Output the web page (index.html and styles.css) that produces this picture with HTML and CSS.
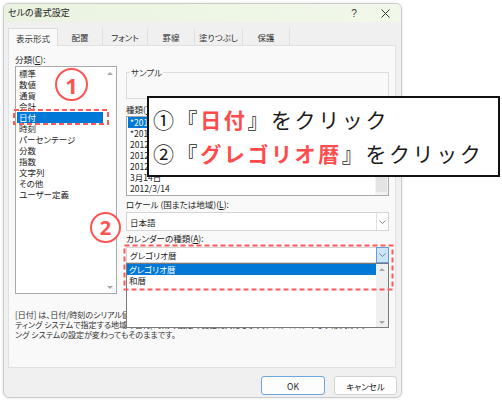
FILE: index.html
```html
<!DOCTYPE html>
<html lang="ja">
<head>
<meta charset="utf-8">
<title>セルの書式設定</title>
<link rel="stylesheet" href="styles.css">
</head>
<body>
<div class="desk">
  <div class="dialog">
    <div class="titlebar">
      <span class="title">セルの書式設定</span>
      <span class="tb-btn help">?</span>
      <span class="tb-btn close"><svg width="9" height="9" viewBox="0 0 9 9"><path d="M0.5 0.5L8.5 8.5M8.5 0.5L0.5 8.5" stroke="#333" stroke-width="1"/></svg></span>
    </div>
    <div class="tabs">
      <div class="tab active">表示形式</div>
      <div class="tab">配置</div>
      <div class="tab">フォント</div>
      <div class="tab">罫線</div>
      <div class="tab">塗りつぶし</div>
      <div class="tab">保護</div>
    </div>
    <div class="panel">
      <div class="cols">
        <div class="left">
          <div class="label">分類(<u>C</u>):</div>
          <div class="listbox cat">
            <ul class="items">
              <li>標準</li><li>数値</li><li>通貨</li><li>会計</li><li class="sel">日付</li><li>時刻</li><li>パーセンテージ</li><li>分数</li><li>指数</li><li>文字列</li><li>その他</li><li>ユーザー定義</li>
            </ul>
            <div class="vscroll"><span class="arr up"></span><span class="arr down"></span></div>
          </div>
        </div>
        <div class="right">
          <fieldset class="sample"><legend>サンプル</legend></fieldset>
          <div class="label lbl-types">種類(<u>T</u>):</div>
          <div class="listbox types">
            <ul class="items">
              <li class="sel">*2012/3/14</li><li>*2012年3月14日</li><li>2012-03-14</li><li>2012年3月14日</li><li>2012年3月</li><li>3月14日</li><li>2012/3/14</li>
            </ul>
            <div class="vscroll track"><span class="thumb"></span></div>
          </div>
          <div class="label lbl-locale">ロケール (国または地域)(<u>L</u>):</div>
          <div class="combo locale">
            <span class="val">日本語</span>
            <span class="drop"><svg width="7" height="4" viewBox="0 0 7 4"><path d="M0.5 0.5L3.5 3.5L6.5 0.5" fill="none" stroke="#8a8a8a" stroke-width="1"/></svg></span>
          </div>
          <div class="label">カレンダーの種類(<u>A</u>):</div>
          <div class="combo-wrap">
            <div class="combo cal">
              <span class="val">グレゴリオ暦</span>
              <span class="drop hot"><svg width="7" height="4" viewBox="0 0 7 4"><path d="M0.5 0.5L3.5 3.5L6.5 0.5" fill="none" stroke="#6b8196" stroke-width="1"/></svg></span>
            </div>
            <div class="droplist">
              <ul class="items">
                <li class="sel">グレゴリオ暦</li><li>和暦</li>
              </ul>
              <div class="vscroll gray"><span class="arr up"></span><span class="arr down"></span></div>
            </div>
          </div>
        </div>
      </div>
      <p class="desc">[日付] は、日付/時刻のシリアル値を日付形式で表示します。アスタリスク (*) で始まる日付形式は、オペレー<br>ティング システムで指定する地域の日付/時刻の設定の変更に対応します。アスタリスクのない形式は、オペレーティ<br>ング システムの設定が変わってもそのままです。</p>
    </div>
    <div class="buttons">
      <button class="btn ok">OK</button>
      <button class="btn cancel">キャンセル</button>
    </div>
  </div>

  <svg class="marks" width="502" height="400" viewBox="0 0 502 400">
    <rect x="14" y="110" width="94" height="14" fill="none" stroke="#ff5a5a" stroke-width="2" stroke-dasharray="5 3"/>
    <rect x="124.5" y="245.5" width="268" height="44" fill="none" stroke="#ff5a5a" stroke-width="2" stroke-dasharray="5 3"/>
  </svg>
  <div class="marker m1">1</div>
  <div class="marker m2">2</div>

  <div class="callout">
    <p>①『<b>日付</b>』をクリック</p>
    <p>②『<b>グレゴリオ暦</b>』をクリック</p>
  </div>
</div>
</body>
</html>
```

FILE: styles.css
```css
* { box-sizing: border-box; margin: 0; padding: 0; }
html, body { width: 502px; height: 400px; overflow: hidden; background: #fff; }
body {
  font-family: "Noto Sans CJK JP", "Noto Sans", sans-serif;
  font-feature-settings: "palt";
  color: #222;
}
.desk { position: relative; width: 502px; height: 400px; padding: 3px 0 0 3px; }

.dialog {
  width: 399px; height: 395px;
  background: #f0f0f0;
  border: 1px solid #cbcbcb;
  border-radius: 6px;
  box-shadow: 0 0 3px rgba(0,0,0,0.12);
  display: flex; flex-direction: column;
  overflow: hidden;
}
.titlebar {
  flex: none; height: 18px;
  display: flex; align-items: center;
  background: linear-gradient(90deg, #eaf3e1 0%, #eef6e6 60%, #f1f8ea 100%);
  padding-left: 4px;
}
.title { flex: 1; font-size: 9px; line-height: 18px; color: #1f1f1f; }
.tb-btn { width: 20px; height: 18px; display: flex; align-items: center; justify-content: center; font-size: 10px; color: #333; }
.help { font-family: "Liberation Sans", sans-serif; }
.close { margin-left: 11px; margin-right: 6px; }

.tabs { flex: none; display: flex; height: 17px; margin: 6px 0 0 4px; position: relative; z-index: 2; }
.tab {
  height: 17px; display: flex; align-items: center; justify-content: center;
  font-size: 8.5px; color: #333; border-right: 1px solid #e0e0e0;
}
.tab:nth-child(1) { width: 50px; }
.tab:nth-child(2) { width: 45px; }
.tab:nth-child(3) { width: 45px; }
.tab:nth-child(4) { width: 47px; }
.tab:nth-child(5) { width: 48px; }
.tab:nth-child(6) { width: 47px; }
.tab.active { background: #f9f9f9; border: 1px solid #dcdcdc; border-bottom: 0; height: 18px; }

.panel {
  flex: none; margin-left: 4px; width: 388px; height: 323px;
  background: #f9f9f9; border: 1px solid #e1e1e1;
  padding: 6px 6px 0; position: relative; z-index: 1;
}
.cols { display: grid; grid-template-columns: 102px 263px; column-gap: 9px; align-items: start; }
.label { font-size: 8.5px; line-height: 14px; height: 14px; white-space: nowrap; color: #222; }

.listbox { background: #fff; border: 1px solid #a9a9a9; display: flex; overflow: hidden; }
.cat { height: 228px; }
.items { list-style: none; flex: 1; padding: 1px 0 0 1px; min-width: 0; }
.items li { height: 11px; line-height: 11px; font-size: 8.5px; padding-left: 2px; white-space: nowrap; overflow: hidden; color: #222; }
.items li.sel { background: #0078d7; color: #fff; }
.vscroll {
  width: 13px; flex: none; display: flex; flex-direction: column;
  justify-content: space-between; align-items: center;
  padding: 5px 0 4px; background: #fff;
}
.arr { width: 0; height: 0; border-left: 3px solid transparent; border-right: 3px solid transparent; }
.arr.up { border-bottom: 3px solid #a6a6a6; }
.arr.down { border-top: 3px solid #a6a6a6; }

.right { display: flex; flex-direction: column; }
.sample { margin-top: 14px; border: 1px solid #dcdcdc; height: 33px; padding: 0; }
.sample legend { font-size: 8.5px; line-height: 12px; margin-left: 3px; padding: 0 1px; color: #333; }
.lbl-types { margin-top: 3px; }
.types { height: 80px; }
.types .items { padding-top: 0; }
.track { background: #f3f3f3; padding: 1px 1px 3px; justify-content: flex-start; }
.thumb { display: block; width: 100%; flex: 1; background: #e4e4e4; }
.lbl-locale { margin-top: 1px; }

.combo { height: 19px; border: 1px solid #d5d5d5; background: #fff; display: flex; align-items: stretch; font-size: 8.5px; margin-top: 1px; }
.combo .val { flex: 1; padding-left: 3px; display: flex; align-items: center; }
.combo .drop { width: 12px; border-left: 1px solid #e0e0e0; display: flex; align-items: center; justify-content: center; }
.combo-wrap { position: relative; margin-top: 2px; }
.combo.cal { height: 16px; margin-top: 0; }
.combo .drop.hot { background: #cde5f8; border: 1px solid #5d9fe0; margin: -1px -1px -1px 0; width: 13px; }

.droplist {
  position: absolute; left: 0; right: 0; top: 100%; height: 65px;
  background: #fff; border: 1px solid #7a7a7a; display: flex; z-index: 3;
}
.droplist .items { padding: 0; }
.vscroll.gray { background: #f0f0f0; width: 12px; padding: 4px 0 3px; }

.desc { margin-top: 16px; font-size: 8px; line-height: 10px; color: #333; white-space: nowrap; overflow: hidden; width: 374px; }

.buttons { flex: none; display: flex; justify-content: flex-end; gap: 9px; margin-top: 8px; padding-right: 4px; }
.btn { height: 19px; font-family: inherit; font-feature-settings: "palt"; font-size: 8.5px; background: #fdfdfd; border: 1px solid #d3d3d3; border-radius: 3px; color: #222; }
.btn.ok { width: 64px; border-color: #6fa4dc; }
.btn.cancel { width: 63px; }

.marks { position: absolute; left: 0; top: 0; z-index: 9; }
.marker {
  position: absolute; border: 2.5px solid #ff5252; border-radius: 50%;
  background: #fff; color: #ff5252;
  font-family: "Noto Sans", sans-serif; font-weight: 700;
  display: flex; align-items: center; justify-content: center; z-index: 10;
}
.m1 { left: 55px; top: 68px; width: 33px; height: 33px; font-size: 22px; }
.m2 { left: 90px; top: 212px; width: 31px; height: 31px; font-size: 20px; }

.callout {
  position: absolute; left: 147px; top: 96px; width: 353px; height: 81px;
  border: 2px solid #111; background: #fff;
  padding: 4px 0 0 4px;
  font-feature-settings: normal;
  font-size: 21px; line-height: 34px; letter-spacing: 2.6px;
  color: #1a1a1a; font-weight: 400; white-space: nowrap; z-index: 11;
}
.callout b { color: #ff4b4b; font-weight: 700; }
```
